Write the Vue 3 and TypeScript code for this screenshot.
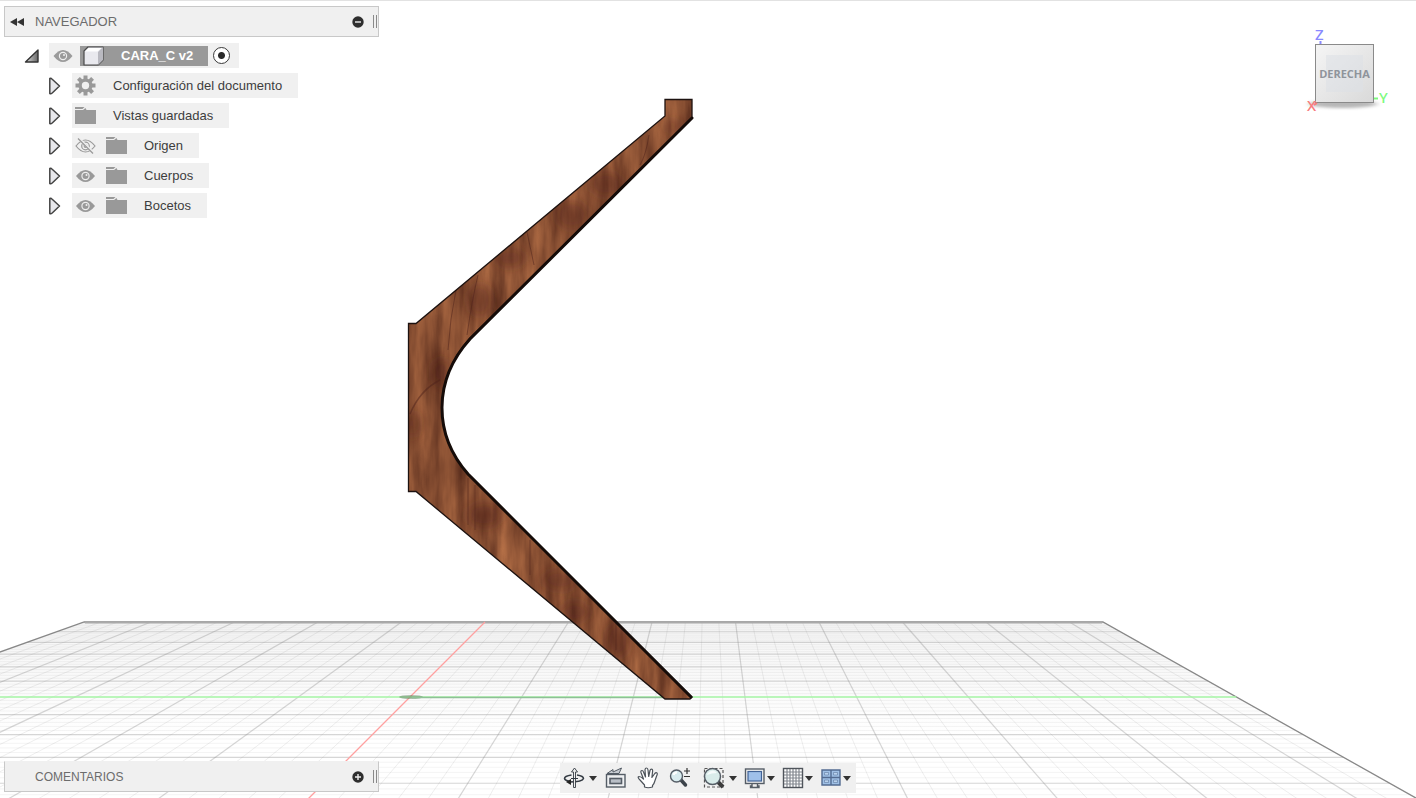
<script setup lang="ts">
interface TreeItem {
  label: string
  icon: 'gear' | 'folder'
  eye: 'none' | 'on' | 'off'
}
interface Line {
  x1: number
  y1: number
  x2: number
  y2: number
  major: boolean
}

const items: TreeItem[] = [
  { label: 'Configuración del documento', icon: 'gear', eye: 'none' },
  { label: 'Vistas guardadas', icon: 'folder', eye: 'none' },
  { label: 'Origen', icon: 'folder', eye: 'off' },
  { label: 'Cuerpos', icon: 'folder', eye: 'on' },
  { label: 'Bocetos', icon: 'folder', eye: 'on' },
]

// Ground plane seen in perspective: columns meet at the horizon,
// rows are evenly spaced in inverse distance from it.
const horizon = 399.6
const far = 622
const near = 860
const unit = 16.7
const originFar = 485
const slope = -1
const xAt = (n: number, y: number): number => {
  const scale = (y - horizon) / (far - horizon)
  return originFar + slope * (y - far) + n * unit * scale
}

const columns: Line[] = []
for (let n = -23; n < 37; n++) {
  if (n === 0) continue
  columns.push({ x1: xAt(n, far), y1: far, x2: xAt(n, near), y2: near, major: n % 5 === 0 })
}
const rows: Line[] = []
for (let n = -29; n < 34; n++) {
  if (n === 0) continue
  const y = horizon + 1 / (0.0033625 - n * 0.0000378)
  rows.push({ x1: xAt(-24, y), y1: y, x2: xAt(37, y), y2: y, major: n % 5 === 0 })
}
const plane = `${xAt(-24, near)},${near} ${xAt(-24, far)},${far} ${xAt(37, far)},${far} ${xAt(37, near)},${near}`
const axisY = 697

const bracket =
  'M665 99.500H692V118L470 338C433 380 433 434 468 474L692 697L690 699H665L416 491.500H408.500V323.500H416L665 116Z'
</script>

<template>
  <main class="app">
    <svg class="scene" viewBox="0 0 1416 798" preserveAspectRatio="xMidYMid slice" aria-hidden="true">
      <defs>
        <linearGradient id="floor" x1="0" y1="622" x2="0" y2="740" gradientUnits="userSpaceOnUse">
          <stop offset="0" stop-color="#f5f5f5" />
          <stop offset="1" stop-color="#ffffff" />
        </linearGradient>
        <filter id="wood" x="0" y="0" width="100%" height="100%" color-interpolation-filters="sRGB">
          <feTurbulence type="fractalNoise" baseFrequency="0.07 0.012" numOctaves="4" seed="8" result="n" />
          <feColorMatrix
            in="n"
            type="matrix"
            values="0.44 0 0 0 0.32  0.32 0 0 0 0.155  0.2 0 0 0 0.1  0 0 0 0 1"
            result="c"
          />
          <feComposite in="c" in2="SourceGraphic" operator="in" />
        </filter>
        <clipPath id="body"><path :d="bracket" /></clipPath>
        <filter id="soft" x="-20%" y="-20%" width="140%" height="140%"><feGaussianBlur stdDeviation="6" /></filter>
      </defs>

      <polygon :points="plane" fill="url(#floor)" />
      <line
        v-for="(l, i) in rows"
        :key="'r' + i"
        :x1="l.x1"
        :y1="l.y1"
        :x2="l.x2"
        :y2="l.y2"
        :class="l.major ? 'major' : 'minor'"
      />
      <line
        v-for="(l, i) in columns"
        :key="'c' + i"
        :x1="l.x1"
        :y1="l.y1"
        :x2="l.x2"
        :y2="l.y2"
        :class="l.major ? 'major' : 'minor column'"
      />
      <polyline :points="plane" class="edge" />
      <path d="M85 622.500H1102" class="far-edge" />
      <line :x1="originFar" :y1="far" :x2="xAt(0, near)" :y2="near" class="axis-x" />
      <line :x1="xAt(-24, axisY)" :y1="axisY" :x2="xAt(37, axisY)" :y2="axisY" class="axis-y" />
      <ellipse cx="411" cy="697" rx="12" ry="2" fill="#5f7f5f" opacity="0.5" />
      <path d="M412 697.500H668" stroke="#8fc096" stroke-width="1.600" />

      <path :d="bracket" fill="#824a30" filter="url(#wood)" />
      <g clip-path="url(#body)">
        <g fill="#4b1c18" opacity="0.45" filter="url(#soft)">
          <ellipse cx="606" cy="184" rx="17" ry="12" />
          <ellipse cx="572" cy="215" rx="16" ry="14" />
          <ellipse cx="510" cy="258" rx="16" ry="9" />
          <ellipse cx="480" cy="300" rx="12" ry="16" />
          <ellipse cx="441" cy="372" rx="9" ry="14" />
          <ellipse cx="412" cy="424" rx="7" ry="14" />
          <ellipse cx="484" cy="515" rx="18" ry="12" />
          <ellipse cx="560" cy="580" rx="18" ry="10" />
          <ellipse cx="575" cy="612" rx="15" ry="10" />
          <ellipse cx="618" cy="640" rx="12" ry="17" />
          <ellipse cx="673" cy="126" rx="8" ry="7" />
        </g>
        <g fill="none" stroke="#4f231b" opacity="0.5">
          <path d="M410 414Q420 390 440 380" stroke-width="1.500" />
          <path d="M478 275Q472 300 467 335M456 290Q450 318 448 350M527 232L534 265M649 135Q646 155 640 165" />
          <path d="M468 478V525M475 485V530M530 540V575M616 620V650" />
        </g>
      </g>
      <path :d="bracket" fill="none" stroke="#1c1210" stroke-width="1.300" />
      <path
        d="M692 118L470 339C433 380 433 434 468 474L691 697"
        fill="none"
        stroke="#150c09"
        stroke-width="3"
        stroke-linecap="round"
      />
    </svg>

    <aside class="browser">
      <header class="panel">
        <button class="icon-button collapse" aria-label="Contraer">
          <svg width="14" height="8" viewBox="0 0 14 8"><path d="M7 0V8L0 4ZM14 0V8L7 4Z" fill="#333" /></svg>
        </button>
        <h2 class="panel-title">NAVEGADOR</h2>
        <button class="icon-button" aria-label="Minimizar">
          <svg width="12" height="12" viewBox="0 0 12 12">
            <circle cx="6" cy="6" r="5.700" fill="#2e2e2e" />
            <path d="M3 6H9" stroke="#eee" stroke-width="1.400" />
          </svg>
        </button>
        <span class="grip"></span>
      </header>

      <div class="root-row">
        <button class="icon-button" aria-label="Contraer CARA_C v2">
          <svg width="16" height="16" viewBox="0 0 16 16">
            <defs>
              <linearGradient id="tri"><stop offset="0" stop-color="#ddd" /><stop offset="1" stop-color="#666" /></linearGradient>
            </defs>
            <path d="M14 2V14H1.500Z" fill="url(#tri)" stroke="#333" stroke-width="1.400" stroke-linejoin="round" />
          </svg>
        </button>
        <div class="root-box">
          <button class="icon-button" aria-label="Visibilidad">
            <svg width="20" height="14" viewBox="0 0 20 14">
              <path d="M0.500 7Q10-5 19.500 7Q10 19 0.500 7Z" fill="#9b9b9b" />
              <circle cx="10" cy="7" r="4.200" fill="#efefef" />
              <circle cx="10" cy="7" r="3" fill="#999" />
              <circle cx="11" cy="6" r="1" fill="#efefef" />
            </svg>
          </button>
          <span class="root-name">
            <svg width="22" height="20" viewBox="0 0 22 20">
              <path d="M1 5L5 1H20V14L15 19H1Z" fill="#e9e9ee" stroke="#4a4a4a" stroke-width="1.200" stroke-linejoin="round" />
              <path d="M15 6L20 1V14L15 19Z" fill="#b9b9c0" />
              <path d="M2 5.500L5.500 2H18.500L14.500 5.500Z" fill="#fff" />
            </svg>
            <span>CARA_C v2</span>
          </span>
          <input class="active-radio" type="radio" name="activo" checked aria-label="Activar CARA_C v2" />
        </div>
      </div>

      <ul class="tree">
        <li v-for="item in items" :key="item.label">
          <button class="icon-button" :aria-label="'Expandir ' + item.label">
            <svg width="14" height="18" viewBox="0 0 14 18">
              <path d="M1.800 1.500Q3 1 4.200 2.200L11.500 9L4.200 16Q3 17 1.800 16.500Z" fill="#e8e8ec" stroke="#444" stroke-width="1.500" stroke-linejoin="round" />
            </svg>
          </button>
          <div class="node">
            <svg v-if="item.eye === 'on'" width="21" height="14" viewBox="0 0 20 14">
              <path d="M0.500 7Q10-5 19.500 7Q10 19 0.500 7Z" fill="#999" />
              <circle cx="10" cy="7" r="4.200" fill="#efefef" />
              <circle cx="10" cy="7" r="3" fill="#999" />
              <circle cx="11" cy="6" r="1" fill="#efefef" />
            </svg>
            <svg v-if="item.eye === 'off'" width="21" height="16" viewBox="0 0 21 16" fill="none" stroke="#999" stroke-width="1.200">
              <path d="M1 8Q10.500-4 20 8Q10.500 20 1 8Z" />
              <circle cx="10.500" cy="8" r="3.800" />
              <circle cx="10.500" cy="8" r="1.300" />
              <path d="M4 0.500L19 15.500" stroke="#efefef" stroke-width="2.500" />
              <path d="M3 0.500L18 15.500" />
            </svg>
            <svg v-if="item.icon === 'folder'" width="21" height="17" viewBox="0 0 21 17" fill="#999">
              <path d="M0 0H9.500L7.500 2H0ZM0 3H8L10.500 1L11.500 3H21V17H0Z" />
            </svg>
            <svg v-else width="21" height="21" viewBox="0 0 21 21">
              <g fill="#999">
                <rect v-for="a in 8" :key="a" x="8.500" y="0.500" width="4" height="5" :transform="`rotate(${a * 45} 10.500 10.500)`" />
              </g>
              <circle cx="10.500" cy="10.500" r="5.400" fill="none" stroke="#999" stroke-width="3.400" />
            </svg>
            <span class="label">{{ item.label }}</span>
          </div>
        </li>
      </ul>
    </aside>

    <section class="view-cube">
      <svg width="88" height="92" viewBox="0 0 88 92" role="img" aria-label="Vista derecha">
        <defs>
          <linearGradient id="face" x2="1" y2="1"><stop offset="0" stop-color="#f5f5f5" /><stop offset="1" stop-color="#d9d9d9" /></linearGradient>
          <filter id="shade" x="-20%" y="-100%" width="140%" height="300%"><feGaussianBlur stdDeviation="3 1.500" /></filter>
        </defs>
        <ellipse cx="43" cy="79" rx="34" ry="4" fill="#999" opacity="0.7" filter="url(#shade)" />
        <rect x="15.500" y="19.500" width="58" height="58" fill="url(#face)" stroke="#8a8a8a" />
        <rect x="26" y="30" width="37" height="37" fill="#dce0e6" opacity="0.55" />
        <text x="44.500" y="53" class="face-label" text-anchor="middle">DERECHA</text>
        <text x="15" y="15" class="axis-name" fill="#8989ff">Z</text>
        <path d="M20.500 16V19" stroke="#8989ff" stroke-width="2" />
        <path d="M74 73.500H78" stroke="#7dfa7d" stroke-width="2" />
        <text x="79" y="78" class="axis-name" fill="#7dfa7d">Y</text>
        <text x="7" y="86" class="axis-name" fill="#f87c7c">X</text>
        <path d="M14 80L17 78" stroke="#f87c7c" stroke-width="2" />
      </svg>
    </section>

    <footer class="panel comments">
      <h2 class="panel-title">COMENTARIOS</h2>
      <button class="icon-button" aria-label="Expandir comentarios">
        <svg width="12" height="12" viewBox="0 0 12 12">
          <circle cx="6" cy="6" r="5.700" fill="#2e2e2e" />
          <path d="M3 6H9M6 3V9" stroke="#eee" stroke-width="1.400" />
        </svg>
      </button>
      <span class="grip"></span>
    </footer>

    <nav class="toolbar" aria-label="Navegación">
      <div class="tools motion">
        <button class="tool" aria-label="Órbita">
          <svg width="22" height="22" viewBox="0 0 22 22" fill="none" stroke="#333a42" stroke-width="1.500">
            <path d="M8.500 8Q1.500 9 1.500 11.500Q2 13.500 6 14.200M14 8Q20.500 9 20.500 11.500Q19.500 15 6 15" />
            <path d="M11.500 1L8.500 5H10.500V20.500H12.500V5H14.500Z" fill="#eee" stroke-width="0.900" />
            <path d="M8 12V18L3 15Z" fill="#222" stroke="none" />
            <path d="M8 11.500H15" stroke-width="1" />
          </svg>
          <i class="caret"></i>
        </button>
        <button class="tool plain" aria-label="Mirar a">
          <svg width="22" height="22" viewBox="0 0 22 22" fill="none" stroke="#555d66" stroke-width="1.400">
            <path d="M2 6.500L8 2.500V5L16.500 1L14 6.500Z" stroke-width="1" fill="#c6cbd2" />
            <rect x="1.500" y="7.500" width="18.500" height="12.500" fill="#eef0f2" />
            <rect x="5" y="11.500" width="11.500" height="5" fill="#b9bfc7" stroke-width="1.600" />
          </svg>
        </button>
        <button class="tool plain" aria-label="Encuadre">
          <svg width="22" height="22" viewBox="0 0 22 22" fill="#fff" stroke="#4d535a" stroke-width="1.200" stroke-linejoin="round">
            <path d="M7.500 20V18L3 13Q0 10 2 9.500Q4 9.500 6.500 12L4 5.500Q3.500 3.500 5 3.500Q6 3.500 6.500 5L8.500 10L8 2.800Q8.200 1 9.500 1Q10.800 1 11 3L11.700 9.500L13 3.500Q13.600 1.800 14.800 2.200Q16 2.500 15.500 5L14.900 10.500L17.800 6.500Q19 5.200 20 6Q20.700 7 19.600 9L17.500 15Q17 17 15.500 18.500V20Q11 21.500 7.500 20Z" />
          </svg>
        </button>
        <button class="tool plain" aria-label="Zoom">
          <svg width="22" height="22" viewBox="0 0 22 22" fill="none">
            <path d="M12 13L16.500 18" stroke="#3c434a" stroke-width="3.500" stroke-linecap="round" />
            <circle cx="7.500" cy="9" r="6" fill="#d9ecef" stroke="#555d66" stroke-width="1.400" />
            <path d="M4.500 8Q5 5.500 8 5.500" stroke="#fff" stroke-width="2" />
            <path d="M18 1V7M15 4H21M15 9.500H21" stroke="#333" stroke-width="1.200" />
          </svg>
        </button>
      </div>
      <div class="tools display">
        <button class="tool" aria-label="Ventana de zoom">
          <svg width="22" height="22" viewBox="0 0 22 22" fill="none">
            <rect x="1.500" y="1.500" width="18.500" height="18.500" stroke="#555" stroke-width="1.200" stroke-dasharray="3 2" />
            <path d="M15 15L20 20" stroke="#3c3c3c" stroke-width="4" />
            <circle cx="9.500" cy="9.500" r="8" fill="#d9ecea" stroke="#555d66" stroke-width="1.500" />
            <path d="M4 8Q5 4 10 3.500Q13 4 14 6Q9 6 4 8Z" fill="#f6fbfb" />
          </svg>
          <i class="caret wide"></i>
        </button>
        <button class="tool" aria-label="Configuración de visualización">
          <svg width="22" height="22" viewBox="0 0 22 22" stroke="#555d66" stroke-width="1.400">
            <path d="M8 16V19H6.500V20.500H15V19H13.500V16" fill="#eee" />
            <rect x="1.500" y="2" width="18.500" height="14.500" fill="#f3f3f3" />
            <rect x="4" y="4.500" width="13.500" height="9.500" fill="#9fc0ea" stroke="#426396" stroke-width="1.200" />
          </svg>
          <i class="caret"></i>
        </button>
        <button class="tool" aria-label="Rejilla y forzados de cursor">
          <svg width="22" height="22" viewBox="0 0 22 22" fill="none">
            <rect x="1.500" y="1.500" width="19" height="19" fill="#fff" />
            <path d="M5 2V20M8 2V20M11 2V20M14 2V20M17 2V20M2 5H20M2 8H20M2 11H20M2 14H20M2 17H20" stroke="#83888f" stroke-width="1.200" />
            <rect x="1.500" y="1.500" width="19" height="19" stroke="#50555c" stroke-width="1.400" />
          </svg>
          <i class="caret"></i>
        </button>
        <button class="tool" aria-label="Ventanas gráficas">
          <svg width="22" height="22" viewBox="0 0 22 22" fill="#9fc0e6" stroke="#536b91" stroke-width="1.400">
            <path d="M2 3H11V10.500H2ZM11 3H20V10.500H11ZM2 10.500H11V18H2ZM11 10.500H20V18H11Z" />
            <path d="M4.500 5.500H8.500V8H4.500ZM13.500 5.500H17.500V8H13.500ZM4.500 13H8.500V15.500H4.500ZM13.500 13H17.500V15.500H13.500Z" stroke-width="0.500" fill="#b9d2ee" />
          </svg>
          <i class="caret"></i>
        </button>
      </div>
    </nav>
  </main>
</template>

<style>
body {
  margin: 0;
  background: #fff;
}
</style>

<style scoped>
.app {
  position: relative;
  box-sizing: border-box;
  height: 100vh;
  min-height: 320px;
  overflow: hidden;
  border-top: 1px solid #e2e2e2;
  background: #fff;
  color: #3d3d3d;
  font-family: "Liberation Sans", Arial, sans-serif;
  font-size: 13px;
}
svg {
  display: block;
  flex: none;
}
.scene {
  position: absolute;
  inset: -1px 0 0;
  width: 100%;
  height: calc(100% + 1px);
}
.major {
  stroke: #888;
  stroke-opacity: 0.34;
  stroke-width: 1.2;
}
.minor {
  stroke: #888;
  stroke-opacity: 0.09;
}
.column {
  stroke-opacity: 0.14;
}
.edge {
  fill: none;
  stroke: #888;
  stroke-width: 1.3;
}
.far-edge {
  stroke: #aaa;
  stroke-width: 2;
}
.axis-x {
  stroke: #ffa0a0;
  stroke-width: 1.3;
}
.axis-y {
  stroke: #a4f5a4;
  stroke-width: 1.4;
}

button {
  padding: 0;
  border: 0;
  background: none;
  font: inherit;
  cursor: pointer;
}
.icon-button {
  display: flex;
  flex: none;
}
.browser {
  position: absolute;
  top: 5px;
  left: 4px;
}
.panel {
  display: flex;
  align-items: center;
  box-sizing: border-box;
  width: 375px;
  height: 31px;
  padding: 0 1px 0 5px;
  border: 1px solid #c8c8c8;
  background: #f0f0f0;
}
.collapse {
  width: 25px;
}
.panel-title {
  flex: 1;
  margin: 0;
  color: #6c6c6c;
  font-size: 13px;
  font-weight: 400;
}
.grip {
  width: 2px;
  height: 13px;
  margin-left: 9px;
  border: solid #8a8a8a;
  border-width: 0 1px;
}
.comments {
  position: absolute;
  bottom: 6px;
  left: 4px;
  padding-left: 30px;
  border-top-color: #f0f0f0;
}
.comments .panel-title {
  font-size: 12px;
}
.root-row {
  display: flex;
  align-items: center;
  gap: 9px;
  margin: 6px 0 0 20px;
}
.root-box {
  display: flex;
  align-items: center;
  height: 25px;
  padding: 0 9px 0 4px;
  background: #f0f0f0;
}
.root-name {
  display: flex;
  align-items: center;
  gap: 16px;
  height: 20px;
  margin: 0 5px 0 7px;
  padding: 0 15px 0 3px;
  background: #999;
  color: #fff;
  font-weight: 700;
}
.active-radio {
  box-sizing: border-box;
  width: 17px;
  height: 17px;
  margin: 0;
  border: 1px solid #3a3a3a;
  border-radius: 50%;
  appearance: none;
  background: radial-gradient(circle, #2a2a2a 3px, #fff 4px);
}
.tree {
  display: grid;
  gap: 5px;
  margin: 5px 0 0 44px;
  padding: 0;
  list-style: none;
}
.tree li {
  display: flex;
  align-items: center;
  gap: 10px;
}
.node {
  display: flex;
  align-items: center;
  gap: 10px;
  height: 25px;
  padding: 0 16px 0 3px;
  background: #f0f0f0;
}
.label {
  margin-left: 7px;
}

.view-cube {
  position: absolute;
  top: 24px;
  right: 28px;
}
.face-label {
  fill: #8f949b;
  font-family: "Liberation Sans Narrow", "Open Sans", sans-serif;
  font-size: 11px;
  font-weight: 700;
}
.axis-name {
  font-family: "Noto Sans", sans-serif;
  font-size: 15px;
  font-weight: 500;
}

.toolbar {
  position: absolute;
  bottom: 5px;
  left: 50%;
  display: flex;
  align-items: center;
  gap: 10px;
  height: 30px;
  padding: 0 5px 0 3px;
  background: #f0f0f0;
  transform: translateX(-50%);
}
.tools {
  display: flex;
}
.motion {
  gap: 6px;
}
.display {
  gap: 7px;
}
.tool {
  display: flex;
  align-items: center;
}
.plain {
  padding: 0 2px;
}
.caret {
  width: 0;
  margin-left: 1px;
  border: solid transparent;
  border-width: 5px 4px 0;
  border-top-color: #333;
}
.wide,
.motion .caret {
  margin-left: 4px;
}
</style>
